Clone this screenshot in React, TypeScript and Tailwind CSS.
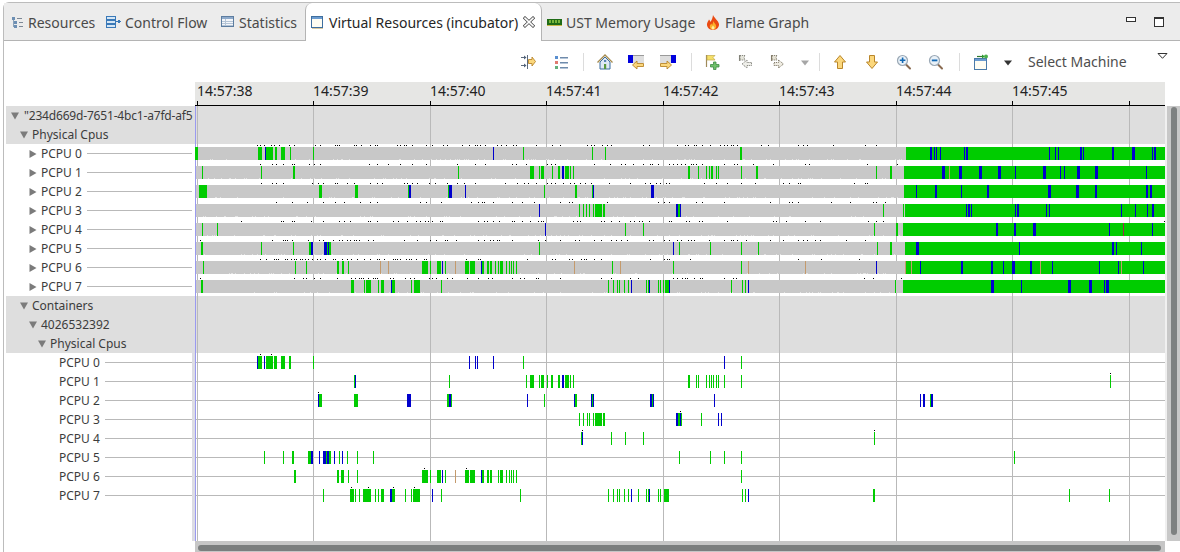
import type { ReactNode } from "react";

const GREEN = "#00cc00";
const BLUE = "#0000cc";
const TAN = "#c49a6c";
const GRID = "#b9b9b9";

const CHART_LEFT = 195;
const CHART_WIDTH = 970;
const TICKS = [197, 313, 430, 546, 663, 779, 896, 1012, 1129];
const TIMES = ["14:57:38", "14:57:39", "14:57:40", "14:57:41", "14:57:42", "14:57:43", "14:57:44", "14:57:45", ""];

interface Track {
  start?: number;
  g: string;
  b: string;
  t?: string;
  r?: string;
  dots?: number[];
}

// top block: scheduling state per cpu, grey until `start`, then solid green
const PHYSICAL: Track[] = [
  {
    start: 906,
    g: "195-198 258-262 266-273 275-277 281-285 290 313 523 592 605 740-742",
    b: "265 493 930-932 934 936 940 964 966-968 1049 1055 1058 1080-1082 1083 1112-1114 1132-1135 1152 1154-1156",
  },
  {
    start: 904,
    g: "202 261 293-295 458 530-534 539 541-544 552 558-560 565-569 570 573 688-690 698 706 709 711-713 716 718 741 756-758 876 890-892",
    b: "562-564 942-945 959-962 979-982 998-1001 1015 1043-1046 1060 1064 1077-1080 1095-1098 1146",
    t: "949",
  },
  {
    start: 904,
    g: "199-207 319-322 355-358 408 448 544 575-577 592",
    b: "409-411 449-452 465 593 651-654 916 935-937 961 987-989 1048-1051 1076-1079 1095-1097 1146-1148 1150-1152",
  },
  {
    start: 905,
    g: "579 583 586 589 593 595-602 603-605 678-680 883 903",
    b: "539 676-678 680 966 968-970 971 1015 1017-1019 1046 1049 1121 1135 1147 1152-1154",
  },
  {
    start: 903,
    g: "202 217 625 643 874 896-898",
    b: "545 996-998 1014-1016 1033-1036 1109 1152",
    r: "1123",
  },
  {
    start: 905,
    g: "201-203 261 293 309-311 327 329-331 539 679 710 741 758 877 890-892",
    b: "311-313 324-327 328 673 916-919 1019 1112-1114 1116 1141",
  },
  {
    start: 906,
    g: "203 295 306 337-339 342-344 348 422-428 430 437-441 445 465-469 470-475 482-484 487-489 490-492 495 498 500-503 506 509 511 513 516 612 673 741",
    b: "442 481 876 920 961-963 991-993 1003 1012-1015 1030-1032 1052 1099 1118 1143",
    t: "380 388 455 574 620 748 805 905 911 1040 1121",
  },
  {
    start: 903,
    g: "201-203 351-354 364 366-371 378 381-384 392-395 411 414-420 441 608 613 617 619 624 628 646 648 658 660 663 665-669 731 742 745 895",
    b: "391 631 649 669 748 991-994 1021 1068-1071 1089-1092 1104 1106-1109",
  },
];

// little black marks above the bars, read off a 3x crop (left half + right half)
const MARKS_LEFT = [
  [187, 196, 208, 229, 238, 253, 283, 298, 361, 376, 421, 427, 433, 478, 484, 499, 526, 541, 547, 607, 616, 628, 634, 652, 694, 712, 745, 757, 802, 823, 841, 847, 856, 871, 907, 919, 934, 955, 964, 1024],
  [196, 232, 244, 265, 292, 298, 343, 358, 376, 523, 547, 580, 616, 652, 694, 787, 841, 871, 952, 964, 994],
  [199, 232, 244, 265, 352, 370, 385, 421, 427, 457, 478, 526, 547, 562, 628, 637, 652, 667, 703, 721, 757, 787, 808, 841, 931, 967, 988, 1000, 1024],
  [244, 292, 337, 385, 421, 448, 496, 526, 547, 676, 694, 739, 829, 850, 862, 868, 895, 952, 982, 1018],
  [139, 259, 265, 292, 298, 349, 385, 433, 448, 466, 520, 526, 547, 595, 610, 637, 664, 676, 691, 700, 712, 736, 742, 850, 868, 877, 895, 913, 952, 958, 982, 1006, 1030, 1039, 1045],
  [16, 232, 265, 271, 277, 292, 340, 373, 385, 415, 433, 442, 457, 466, 478, 484, 493, 520, 535, 628, 667, 706, 724, 751, 757, 784, 850, 868, 886, 895, 907, 913, 952, 1030],
  [196, 214, 238, 244, 250, 271, 277, 289, 298, 304, 316, 322, 331, 340, 352, 367, 376, 391, 415, 421, 442, 457, 469, 487, 508, 526, 547, 553, 568, 595, 601, 607, 616, 634, 643, 649, 664, 688, 694, 814, 850, 856, 997],
  [16, 298, 325, 334, 358, 376, 427, 469, 481, 493, 499, 505, 520, 535, 541, 547, 586, 595, 631, 646, 658, 703, 712, 724, 757, 772, 817, 850, 880, 892, 952, 976, 988, 1024, 1030],
];
const MARKS_RIGHT = [
  [22, 46, 127, 139, 148, 172, 187, 199, 295, 313, 397, 421, 430, 448, 454, 472, 496, 526, 538, 547, 559, 565, 577, 649, 670, 760, 775, 787, 865, 961, 994],
  [7, 19, 31, 148, 196, 229, 241, 265, 295, 316, 322, 340, 373, 385, 397, 409, 421, 439, 445, 454, 472, 538, 568, 577, 625, 685, 781, 793, 967, 1056],
  [7, 19, 31, 55, 76, 88, 106, 121, 139, 193, 256, 301, 316, 334, 346, 364, 373, 478, 514, 547, 589, 631, 715, 733, 760, 766, 928, 961, 967],
  [46, 73, 82, 187, 340, 358, 373, 454, 472, 538, 676, 733, 742, 760, 859, 916, 985, 994, 1021],
  [85, 97, 106, 169, 178, 199, 223, 256, 268, 283, 292, 313, 373, 379, 424, 433, 463, 472, 547, 685, 694, 724, 781, 826, 970, 994, 1015],
  [1, 46, 91, 103, 148, 169, 199, 214, 229, 247, 313, 325, 358, 373, 397, 409, 430, 439, 448, 493, 538, 559, 565, 577, 604, 676, 715, 760, 775, 787, 811, 826, 904, 961],
  [22, 31, 73, 82, 109, 118, 124, 148, 169, 316, 358, 367, 373, 436, 760, 829, 943],
  [46, 169, 199, 256, 280, 385, 397, 412, 421, 427, 448, 466, 472, 538, 565, 574, 958, 985, 1068],
];
const EXTRA_MARKS: number[][] = [[], [], [], [], [1164], [], [], []];

const CONTAINER: Track[] = [
  {
    g: "258-262 266-273 274-277 281-285 289-291 313 523 741",
    b: "257 264 469 475 477 493 724",
    dots: [260, 271],
  },
  {
    g: "354 449 526 530-534 539 541-544 547 551-553 558-560 565-569 570 573 688-690 696 698 706 709 711 713 716 718 724 741 1110",
    b: "355 562-564",
    dots: [1110],
  },
  {
    g: "319-322 354-358 447-449 451 544 575-577 592 652 930",
    b: "318 407-411 449-451 527 574 591 593 650-652 653 714 920 923-925 931-933",
    dots: [318],
  },
  {
    g: "579 583 587 589 593 595-602 603-605 678-680 681 701",
    b: "676-678 680 718 721",
    dots: [680],
  },
  { g: "581 611 625 643 874", b: "582", dots: [582, 874] },
  {
    g: "264 283 292-294 308-311 326 329-331 339 347 357 373 679 710 724 741 1014",
    b: "311-313 319 323-326 327-329 334 342",
  },
  {
    g: "294-296 337-339 341-344 348 357 422-428 430 437-441 445 465-469 470-475 482-484 487-489 490-492 498 500-503 506 509 511 513 516 741",
    b: "442 481",
    t: "455",
    dots: [424, 466],
  },
  {
    g: "323 350-354 355 359 363-371 375 378 381-384 392-395 405 411 413-420 441 520 608 613 617 619 624 628 638 646 648 658 660 664-669 742 745 873-875 1069 1109",
    b: "390-392 432 631 649 748",
    dots: [351, 368, 393, 414],
  },
];

const spans = (list = ""): [number, number][] =>
  list
    .split(" ")
    .filter(Boolean)
    .map((part) => {
      const [from, to] = part.split("-").map(Number);
      return [from, to ?? from + 1];
    });

const physicalMarks = (i: number) => [
  ...MARKS_LEFT[i].map((z) => 195 + Math.floor(z / 3)),
  ...MARKS_RIGHT[i].map((z) => 545 + Math.floor(z / 3)),
  ...EXTRA_MARKS[i],
];

const frayed = (seed: number, end: number) => {
  const out: number[] = [];
  for (let x = 200; x < end - 2; x++) {
    if (((x * 7919 + seed * 104729) ^ (x * x * 31)) % 11 === 0) out.push(x);
  }
  return out;
};

const Spans = ({ list, color, y = 3, h = 13 }: { list?: string; color: string; y?: number; h?: number }) => (
  <>
    {spans(list).map(([from, to]) => (
      <rect key={from} x={from - CHART_LEFT} y={y} width={to - from} height={h} fill={color} />
    ))}
  </>
);

const GridLines = ({ height }: { height: number }) => (
  <>
    {TICKS.map((x) => (
      <rect key={x} x={x - CHART_LEFT} y={0} width={1} height={height} fill={GRID} />
    ))}
  </>
);

const GroupChart = () => (
  <svg width={CHART_WIDTH} height={19} shapeRendering="crispEdges" className="block">
    <rect width={CHART_WIDTH} height={19} fill="#dedede" />
    <GridLines height={19} />
    <rect width={1} height={19} fill="#9a9af0" />
  </svg>
);

const StateChart = ({ track, marks, seed }: { track: Track; marks: number[]; seed: number }) => {
  const start = track.start ?? 1165;
  return (
    <svg width={CHART_WIDTH} height={19} shapeRendering="crispEdges" className="block">
      <GridLines height={19} />
      <rect y={3} width={start - CHART_LEFT} height={13} fill="#c8c8c8" />
      {frayed(seed, start).map((x) => (
        <rect key={x} x={x - CHART_LEFT} y={15} width={1} height={1} fill="#e4e4e4" />
      ))}
      <rect width={1} height={19} fill="#9a9af0" />
      <rect x={start - CHART_LEFT} y={3} width={1165 - start} height={13} fill={GREEN} />
      <Spans list={track.g} color={GREEN} />
      <Spans list={track.t} color={TAN} />
      <Spans list={track.b} color={BLUE} />
      <Spans list={track.r} color="#a0284a" />
      {marks.map((x) => (
        <rect key={x} x={x - CHART_LEFT} y={1} width={1} height={1} fill="#000" />
      ))}
    </svg>
  );
};

const EventChart = ({ track }: { track: Track }) => (
  <svg width={CHART_WIDTH} height={19} shapeRendering="crispEdges" className="block">
    <GridLines height={19} />
    <rect y={9} width={CHART_WIDTH} height={1} fill={GRID} />
    <rect width={1} height={19} fill="#9a9af0" />
    <Spans list={track.g} color={GREEN} />
    <Spans list={track.t} color={TAN} />
    <Spans list={track.b} color={BLUE} />
    {(track.dots ?? []).map((x) => (
      <rect key={x} x={x - CHART_LEFT} y={1} width={1} height={1} fill="#000" />
    ))}
  </svg>
);

const Twisty = ({ open }: { open: boolean }) => (
  <svg width={8} height={8} viewBox="0 0 8 8" className="shrink-0">
    <polygon points={open ? "0,0.5 8,0.5 4,7.5" : "0.5,0 7.5,4 0.5,8"} fill="#7b7b7b" />
  </svg>
);

const INDENT = ["pl-[5px]", "pl-[14px]", "pl-[23px]", "pl-[32px]", "pl-[53px]"];

const Row = ({
  label,
  depth,
  twisty,
  strip,
  group,
  children,
}: {
  label: string;
  depth: number;
  twisty?: "open" | "closed";
  strip?: boolean;
  group?: boolean;
  children: ReactNode;
}) => (
  <div className={`flex h-[19px] ${group ? "bg-[#dedede]" : ""}`}>
    <div
      className={`flex h-full w-[189px] items-center whitespace-nowrap ${INDENT[depth]} ${
        strip ? "border-r-[3px] border-[#dcdce4]" : "pr-[3px]"
      }`}
    >
      {twisty && <Twisty open={twisty === "open"} />}
      <span
        className={`${twisty ? (depth === 0 ? "ml-[5px] tracking-[-0.18px]" : "ml-[4px]") : ""} text-[12px] leading-[19px] text-[#3c3c3c]`}
      >
        {label}
      </span>
      {!group && <span className="ml-[5px] h-px min-w-0 flex-1 bg-[#b9b9b9]" />}
    </div>
    {children}
  </div>
);

// ---- tab icons ----

const ResourcesIcon = () => (
  <svg width={12} height={13} viewBox="0 0 12 13" shapeRendering="crispEdges">
    <path d="M1 1h3v3H1zM3 5h3v3H3zM3 9h3v3H3z" fill="#6d8fb3" />
    <path d="M2 4h1v7H2z" fill="#8aa2ba" />
    <path d="M6 2h5v1H6zM8 6h4v1H8zM8 10h4v1H8z" fill="#7c8896" />
  </svg>
);

const ControlFlowIcon = () => (
  <svg width={15} height={13} viewBox="0 0 15 13" fill="none" shapeRendering="crispEdges">
    <path d="M0.5 0.5h9v3h-9zM0.5 4.5h9v3h-9zM0.5 8.5h9v3h-9z" stroke="#3a79b8" fill="#d5e6f5" />
    <path d="M10 5.5h3" stroke="#3a79b8" />
    <path d="M12 3.5l3 2-3 2z" fill="#3a79b8" />
  </svg>
);

const StatisticsIcon = () => (
  <svg width={13} height={12} viewBox="0 0 13 12" shapeRendering="crispEdges">
    <rect x={0.5} y={0.5} width={12} height={10} fill="#f3f6fa" stroke="#5d7da0" />
    <rect x={1} y={1} width={11} height={2} fill="#8eaacb" />
    <path d="M1 5h11v1H1zM1 7h11v1H1zM1 9h11v1H1zM4 3h1v7H4z" fill="#b4c4d6" />
  </svg>
);

const WindowIcon = () => (
  <svg width={12} height={13} viewBox="0 0 12 13" shapeRendering="crispEdges">
    <rect x={0.5} y={0.5} width={11} height={11} fill="#fffdf2" stroke="#3f6f9f" />
    <rect x={1} y={1} width={10} height={2} fill="#6b9bd0" />
    <rect x={1} y={12} width={11} height={1} fill="#d9c9a0" />
  </svg>
);

const CloseIcon = () => (
  <svg width={12} height={12} viewBox="0 0 12 12">
    <path d="M2 2.2l8 7.6M10 2.2l-8 7.6" stroke="#4a4a4a" strokeWidth={3.2} strokeLinecap="square" />
    <path d="M2 2.2l8 7.6M10 2.2l-8 7.6" stroke="#fff" strokeWidth={1.6} strokeLinecap="square" />
  </svg>
);

const MemoryIcon = () => (
  <svg width={15} height={7} viewBox="0 0 15 7" shapeRendering="crispEdges">
    <rect width={15} height={6} fill="#1f6b16" />
    <path d="M2 1h2v3H2zM5 1h2v3H5zM8 1h2v3H8zM11 1h2v3h-2z" fill="#78b53a" />
    <rect y={6} width={15} height={1} fill="#c8b84a" />
  </svg>
);

const FlameIcon = () => (
  <svg width={14} height={15} viewBox="0 0 14 15">
    <path d="M7 0c1 3 5 5 6 9 .4 3-2.500 6-6 6S.6 12 1 9c.2-2 1.500-3 2-4.500.8 1 1.300 1.500 1.600 2.500C5.500 5 6.800 3 7 0z" fill="#ea4a12" />
    <path d="M7.200 6c.5 2 3 3 3 5.500 0 1.700-1.500 3-3.200 3s-3.200-1.300-3.200-3c0-1.500 1-2 1.500-3 .3.600.6.900.8 1.500C6.600 9 7.200 7.500 7.200 6z" fill="#fbb02b" />
    <path d="M7 10.500c.6 1 1.500 1.500 1.500 2.500 0 .9-.7 1.500-1.500 1.500S5.500 13.900 5.500 13c0-1 1-1.500 1.500-2.500z" fill="#fff0a0" />
  </svg>
);

// ---- toolbar icons ----

const Tool = ({ className, children }: { className?: string; children: ReactNode }) => (
  <svg width={16} height={16} viewBox="0 0 16 16" className={`shrink-0 ${className ?? ""}`}>
    {children}
  </svg>
);

const Sep = ({ className }: { className: string }) => <div className={`h-[18px] w-px shrink-0 bg-[#dcdcdc] ${className}`} />;

const Drop = ({ className, color }: { className: string; color: string }) => (
  <svg width={10} height={6} viewBox="0 0 10 6" className={`mt-[2px] shrink-0 ${className}`}>
    <polygon points="1,0.500 9,0.500 5,5.500" fill={color} />
  </svg>
);

const YELLOW = "#fbd77c";
const ARROW_EDGE = "#b9862b";

const Toolbar = () => (
  <div className="flex h-[41px] items-center pl-[516px]">
    <Tool>
      <g shapeRendering="crispEdges">
        <path d="M1 3h5v1H1zM1 11h5v1H1zM7 1h1v14H7z" fill="#5d6b7d" />
      </g>
      <path d="M4 1.500l2.500 2-2.500 2zM4 9.500l2.500 2-2.500 2z" fill="#4f6179" />
      <path d="M8.500 5.500h3.500V3l3.500 4.500L12 12V9.500H8.500z" fill={YELLOW} stroke={ARROW_EDGE} strokeWidth={0.9} />
    </Tool>
    <Tool className="ml-[17px]">
      <g shapeRendering="crispEdges">
        <path d="M2 2h3v3H2z" fill="#5a8fd0" />
        <path d="M2 7h3v3H2z" fill="#e07a70" />
        <path d="M2 12h3v3H2z" fill="#63b07c" />
        <path d="M7 3h8v1H7zM7 8h8v1H7zM7 13h8v1H7z" fill="#6f8bab" />
        <path d="M7 4h8v1H7zM7 9h8v1H7zM7 14h8v1H7z" fill="#b5c5d8" />
      </g>
    </Tool>
    <Sep className="ml-[14px]" />
    <Tool className="ml-[13px]">
      <path d="M3 8v7h10V8L8 3z" fill="#dfe9f6" stroke="#3c6f9f" />
      <path d="M0.500 8.500L8 1l7.500 7.500" fill="none" stroke="#a58b4f" strokeWidth={1.300} />
      <rect x={7} y={10} width={2.200} height={5} fill="#5a9a3c" />
      <rect x={7} y={6} width={2.200} height={2} fill="#5a88b8" />
    </Tool>
    <Tool className="ml-[15px]">
      <g shapeRendering="crispEdges">
        <rect x={0} y={2} width={16} height={7} fill="#dedede" />
        <rect x={0} y={1} width={16} height={1} fill="#9a9a9a" />
        <rect x={0} y={1} width={5} height={8} fill="#0000dd" />
      </g>
      <path d="M15.500 9.500H9V7l-4.500 4L9 15v-2.500h6.500z" fill={YELLOW} stroke={ARROW_EDGE} strokeWidth={0.9} />
    </Tool>
    <Tool className="ml-[16px]">
      <g shapeRendering="crispEdges">
        <rect x={0} y={2} width={16} height={7} fill="#dedede" />
        <rect x={0} y={1} width={16} height={1} fill="#9a9a9a" />
        <rect x={11} y={1} width={5} height={8} fill="#0000dd" />
      </g>
      <path d="M0.500 9.500H7V7l4.500 4L7 15v-2.500H0.500z" fill={YELLOW} stroke={ARROW_EDGE} strokeWidth={0.9} />
    </Tool>
    <Sep className="ml-[15px]" />
    <Tool className="ml-[12px]">
      <path d="M2.500 1v12" stroke="#a08a5a" strokeWidth={1.200} />
      <path d="M3 1.500h8l-2 2 2 2.500H3z" fill="#f6e06a" stroke="#c0a94a" strokeWidth={0.7} />
      <path d="M9.500 8h2.500v2.500h3V13h-3v2.500H9.500V13h-3v-2.500h3z" fill="#6fbf6a" stroke="#3f8a45" strokeWidth={0.8} />
    </Tool>
    <Tool className="ml-[17px]">
      <path d="M2.500 1v6" stroke="#8a8a80" strokeWidth={1.100} />
      <path d="M3 1.500h5l-1 2 1 2.500H3z" fill="#e6e6dc" stroke="#6f6f66" strokeWidth={0.8} strokeDasharray="1.200 0.800" />
      <path d="M14.500 8.500H10V6L5 10l5 4v-2.500h4.500z" fill="#efefea" stroke="#77776f" strokeWidth={0.9} strokeDasharray="1.200 0.800" />
    </Tool>
    <Tool className="ml-[16px]">
      <path d="M2.500 1v6" stroke="#8a8270" strokeWidth={1.100} />
      <path d="M3 1.500h5l-1 2 1 2.500H3z" fill="#e6e2d4" stroke="#6f6a58" strokeWidth={0.8} strokeDasharray="1.200 0.800" />
      <path d="M5 8.500h4.500V6l5 4-5 4v-2.500H5z" fill="#efece2" stroke="#77715f" strokeWidth={0.9} strokeDasharray="1.200 0.800" />
    </Tool>
    <Drop className="ml-[15px]" color="#a6a6a6" />
    <Sep className="ml-[9px]" />
    <Tool className="ml-[12px]">
      <path d="M8 1.500l5.500 6.500H10.500v6.500h-5V8H2.500z" fill={YELLOW} stroke={ARROW_EDGE} />
    </Tool>
    <Tool className="ml-[16px]">
      <path d="M8 14.500L13.500 8H10.500V1.500h-5V8H2.500z" fill={YELLOW} stroke={ARROW_EDGE} />
    </Tool>
    <Tool className="ml-[16px]">
      <path d="M9.500 10l4.500 4.500" stroke="#8a6a50" strokeWidth={2} strokeLinecap="round" />
      <circle cx={6.500} cy={6.500} r={5} fill="#e9f1f8" stroke="#9aa8b5" strokeWidth={1.200} />
      <path d="M3.800 5.500h2V3.500h1.600v2h2v1.600h-2v2H5.800v-2h-2z" fill="#1268b3" />
    </Tool>
    <Tool className="ml-[16px]">
      <path d="M9.500 10l4.500 4.500" stroke="#8a6a50" strokeWidth={2} strokeLinecap="round" />
      <circle cx={6.500} cy={6.500} r={5} fill="#e9f1f8" stroke="#9aa8b5" strokeWidth={1.200} />
      <rect x={3.800} y={5.500} width={5.600} height={1.800} fill="#1268b3" />
    </Tool>
    <Sep className="ml-[15px]" />
    <Tool className="ml-[13px]">
      <g shapeRendering="crispEdges">
        <rect x={1.500} y={4.500} width={12} height={11} fill="#fffdf2" stroke="#4a7aa8" />
        <rect x={2} y={5} width={11} height={2} fill="#6b9bd0" />
      </g>
      <path d="M4 2.500h5" stroke="#2f7a2f" strokeWidth={1.200} />
      <path d="M9 0.500l3 2-3 2z" fill="#2f9a2f" />
      <circle cx={13} cy={2.500} r={2} fill="#4cb04c" />
    </Tool>
    <Drop className="ml-[14px]" color="#333333" />
    <span className="ml-[15px] w-[100px] shrink-0 text-[14px] whitespace-nowrap text-[#4e4e4e]">Select Machine</span>
    <svg width={11} height={6} viewBox="0 0 11 6" className="mb-[11px] ml-[29px] shrink-0">
      <polygon points="1,0.500 10,0.500 5.500,5.300" fill="#fff" stroke="#333" />
    </svg>
  </div>
);

const Tab = ({ className, icon, label }: { className: string; icon: ReactNode; label: string }) => (
  <div className={`flex h-[38px] shrink-0 items-center whitespace-nowrap text-[#4a4a4a] ${className}`}>
    {icon}
    <span>{label}</span>
  </div>
);

const TabBar = () => (
  <div className="flex h-[38px] items-start border-b border-[#b4b4b4] bg-[#ececec] text-[14px]">
    <Tab className="w-[98px] gap-[5px] pl-[7px]" icon={<ResourcesIcon />} label="Resources" />
    <Tab className="w-[115px] gap-[4px] pl-[4px]" icon={<ControlFlowIcon />} label="Control Flow" />
    <Tab className="w-[88px] gap-[5px] pl-[4px]" icon={<StatisticsIcon />} label="Statistics" />
    <div className="flex h-[38px] w-[237px] shrink-0 items-center rounded-t-[7px] border-x border-t-0 border-[#b4b4b4] bg-white pl-[5px] whitespace-nowrap text-[#262626]">
      <WindowIcon />
      <span className="ml-[6px] w-[188px]">Virtual Resources (incubator)</span>
      <span className="ml-[6px]">
        <CloseIcon />
      </span>
    </div>
    <Tab className="w-[160px] gap-[4px] pl-[5px]" icon={<MemoryIcon />} label="UST Memory Usage" />
    <Tab className="w-[120px] gap-[5px] pl-[4px]" icon={<FlameIcon />} label="Flame Graph" />
    <div className="mt-[14px] ml-auto flex items-start gap-[18px] pr-[16px]">
      <div className="h-[5px] w-[10px] border border-[#333] bg-white" />
      <div className="h-[10px] w-[10px] border border-t-2 border-[#333] bg-white" />
    </div>
  </div>
);

const TimeAxis = () => (
  <div className="ml-[191px] flex h-[24px] w-[970px] overflow-hidden border-b border-black bg-[#e6e6e4] pl-[2px]">
    {TIMES.map((time, i) => (
      <div
        key={i}
        className={`flex h-full shrink-0 flex-col ${i === 8 ? "w-[34px]" : i % 2 === 0 ? "w-[116px]" : "w-[117px]"}`}
      >
        <span className="h-[18px] text-[14px] leading-[18px] whitespace-nowrap text-[#222]">{time}</span>
        <span className="mt-auto h-[4px] w-px bg-black" />
      </div>
    ))}
  </div>
);

const App = () => (
  <div className="h-[552px] w-[1180px] overflow-hidden bg-white pt-[2px] pl-[3px] font-['Noto_Sans',sans-serif]">
    <div className="h-[550px] rounded-tl-[6px] border-t border-l border-[#bcbcbc] bg-white">
      <TabBar />
      <Toolbar />
      <TimeAxis />

      <div className="flex h-[435px]">
        <div className="ml-[2px] w-[1159px]">
          <Row label={'"234d669d-7651-4bc1-a7fd-af5'} depth={0} twisty="open" group>
            <GroupChart />
          </Row>
          <Row label="Physical Cpus" depth={1} twisty="open" group>
            <GroupChart />
          </Row>
          {PHYSICAL.map((track, i) => (
            <Row key={i} label={`PCPU ${i}`} depth={2} twisty="closed">
              <StateChart track={track} marks={physicalMarks(i)} seed={i + 1} />
            </Row>
          ))}
          <Row label="Containers" depth={1} twisty="open" group>
            <GroupChart />
          </Row>
          <Row label="4026532392" depth={2} twisty="open" group>
            <GroupChart />
          </Row>
          <Row label="Physical Cpus" depth={3} twisty="open" group strip>
            <GroupChart />
          </Row>
          {CONTAINER.map((track, i) => (
            <Row key={i} label={`PCPU ${i}`} depth={4} strip>
              <EventChart track={track} />
            </Row>
          ))}
          <div className="flex h-[36px]">
            <div className="h-full w-[189px] border-r-[3px] border-r-[#dcdce4]" />
            <svg width={CHART_WIDTH} height={36} shapeRendering="crispEdges" className="block">
              <GridLines height={36} />
              <rect width={1} height={36} fill="#9a9af0" />
            </svg>
          </div>
        </div>

        <div className="h-full w-[15px] border-l-2 border-[#f0f0f0] bg-[#c8c8c8] pt-px pl-[4px]">
          <div className="h-[428px] w-[6px] rounded-full bg-[#7e8181]" />
        </div>
      </div>

      <div className="ml-[191px] h-[11px] w-[970px] bg-[#c6c6c6] pt-[4px] pl-[3px]">
        <div className="h-[6px] w-[963px] rounded-full bg-[#7b7e7e]" />
      </div>
    </div>
  </div>
);

export default App;
